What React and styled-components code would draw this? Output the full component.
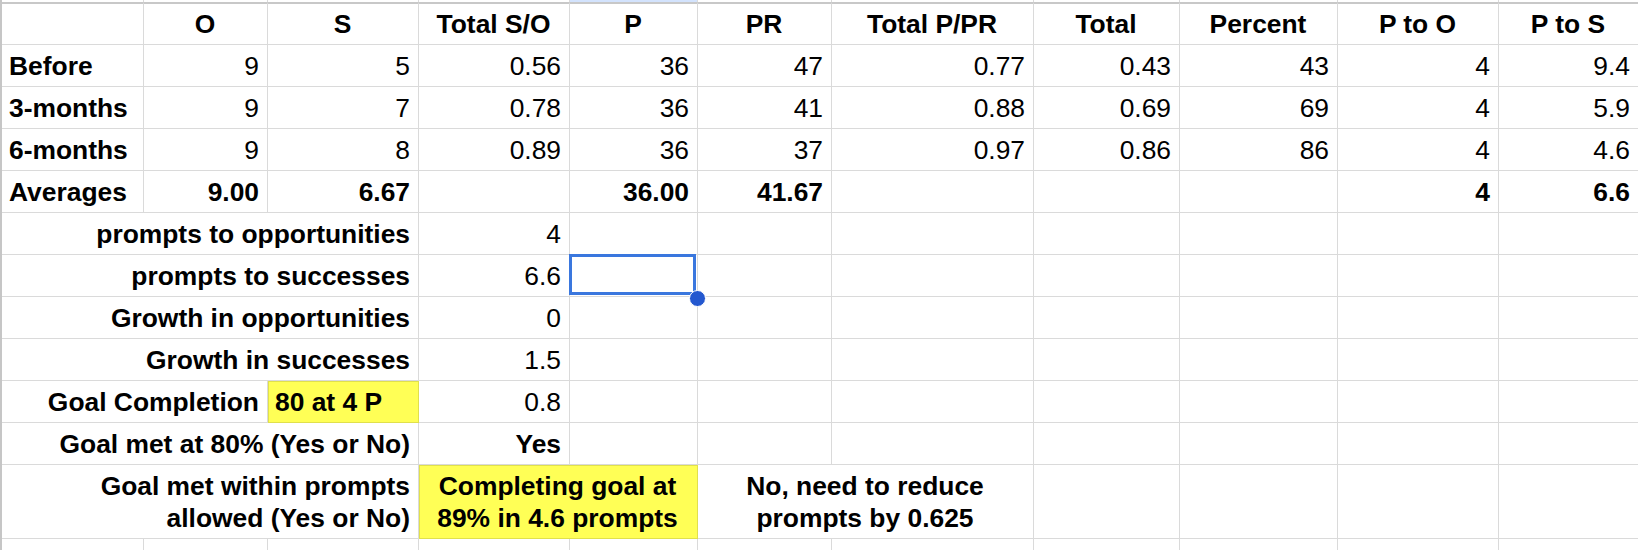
import React from 'react';
import styled, { createGlobalStyle, css } from 'styled-components';

const GlobalStyle = createGlobalStyle`
  html, body {
    margin: 0;
    padding: 0;
    background: #ffffff;
    overflow: hidden;
  }
  body {
    font-family: "Liberation Sans", Arial, sans-serif;
  }
`;

const COLS = [142, 124, 151, 151, 128, 134, 202, 146, 158, 161, 140];
const GRID = '#dadada';

const Sheet = styled.div`
  display: grid;
  grid-template-columns: ${COLS.map((c) => `${c}px`).join(' ')};
  grid-template-rows: 2px 43px repeat(10, 42px) 74px 12px;
  width: max-content;
  border-left: 2px solid #c6c6c6;
  font-family: "Liberation Sans", Arial, sans-serif;
  font-size: 26.4px;
  color: #000000;
`;

const StripCell = styled.div`
  border-right: 1px solid ${GRID};
  background: ${(p) => (p.$active ? '#d3e3fd' : '#ffffff')};
`;

const Cell = styled.div`
  position: relative;
  box-sizing: border-box;
  display: flex;
  align-items: center;
  justify-content: ${(p) =>
    p.$align === 'left' ? 'flex-start' : p.$align === 'center' ? 'center' : 'flex-end'};
  text-align: ${(p) => p.$align || 'right'};
  grid-column: span ${(p) => p.$span || 1};
  padding: 2px 8px 0 7px;
  border-right: 1px solid ${GRID};
  border-bottom: 1px solid ${GRID};
  font-weight: ${(p) => (p.$bold ? 700 : 400)};
  line-height: 31.5px;
  white-space: nowrap;
  ${(p) =>
    p.$header &&
    css`
      border-top: 2px solid #c8c8c8;
    `}
  ${(p) =>
    p.$fill &&
    css`
      background: #ffff56;
      border-right-color: #e0e04c;
      border-bottom-color: #e0e04c;
      box-shadow: inset 1px 1px 0 #e0e04c;
    `}
`;

const Selection = styled.div`
  position: absolute;
  top: -1px;
  left: -1px;
  right: 1px;
  bottom: 1px;
  border: 3px solid #3a77de;
  pointer-events: none;
  z-index: 2;
`;

const FillHandle = styled.div`
  position: absolute;
  left: 119px;
  top: 35px;
  width: 15px;
  height: 15px;
  border-radius: 50%;
  background: #2458cf;
  border: 1px solid #ffffff;
  z-index: 3;
`;

const header = ['', 'O', 'S', 'Total S/O', 'P', 'PR', 'Total P/PR', 'Total', 'Percent', 'P to O', 'P to S'];

const dataRows = [
  ['Before', '9', '5', '0.56', '36', '47', '0.77', '0.43', '43', '4', '9.4'],
  ['3-months', '9', '7', '0.78', '36', '41', '0.88', '0.69', '69', '4', '5.9'],
  ['6-months', '9', '8', '0.89', '36', '37', '0.97', '0.86', '86', '4', '4.6'],
];

const averages = ['Averages', '9.00', '6.67', '', '36.00', '41.67', '', '', '', '4', '6.6'];

const empties = (n) => Array.from({ length: n }, () => ({ text: '' }));

const summaryRows = [
  [
    { text: 'prompts to opportunities', span: 3, bold: true },
    { text: '4' },
    ...empties(7),
  ],
  [
    { text: 'prompts to successes', span: 3, bold: true },
    { text: '6.6' },
    { text: '', selected: true },
    ...empties(6),
  ],
  [
    { text: 'Growth in opportunities', span: 3, bold: true },
    { text: '0' },
    ...empties(7),
  ],
  [
    { text: 'Growth in successes', span: 3, bold: true },
    { text: '1.5' },
    ...empties(7),
  ],
  [
    { text: 'Goal Completion', span: 2, bold: true },
    { text: '80 at 4 P', align: 'left', bold: true, fill: true },
    { text: '0.8' },
    ...empties(7),
  ],
  [
    { text: 'Goal met at 80% (Yes or No)', span: 3, bold: true },
    { text: 'Yes', bold: true },
    ...empties(7),
  ],
  [
    { lines: ['Goal met within prompts', 'allowed (Yes or No)'], span: 3, bold: true },
    { lines: ['Completing goal at', '89% in 4.6 prompts'], span: 2, bold: true, align: 'center', fill: true },
    { lines: ['No, need to reduce', 'prompts by 0.625'], span: 2, bold: true, align: 'center' },
    ...empties(4),
  ],
  empties(11),
];

function renderContent(c) {
  if (c.lines) {
    return (
      <span>
        {c.lines[0]}
        <br />
        {c.lines[1]}
      </span>
    );
  }
  return c.text;
}

export default function App() {
  return (
    <>
      <GlobalStyle />
      <Sheet>
        {COLS.map((_, i) => (
          <StripCell key={`s${i}`} $active={i === 4} />
        ))}

        {header.map((h, i) => (
          <Cell key={`h${i}`} $header $bold $align="center">
            {h}
          </Cell>
        ))}

        {dataRows.map((row, r) =>
          row.map((v, i) => (
            <Cell key={`d${r}-${i}`} $bold={i === 0} $align={i === 0 ? 'left' : 'right'}>
              {v}
            </Cell>
          ))
        )}

        {averages.map((v, i) => (
          <Cell key={`a${i}`} $bold $align={i === 0 ? 'left' : 'right'}>
            {v}
          </Cell>
        ))}

        {summaryRows.map((row, r) =>
          row.map((c, i) => (
            <Cell
              key={`m${r}-${i}`}
              $span={c.span}
              $bold={c.bold}
              $align={c.align || 'right'}
              $fill={c.fill}
            >
              {renderContent(c)}
              {c.selected && (
                <>
                  <Selection />
                  <FillHandle />
                </>
              )}
            </Cell>
          ))
        )}
      </Sheet>
    </>
  );
}
